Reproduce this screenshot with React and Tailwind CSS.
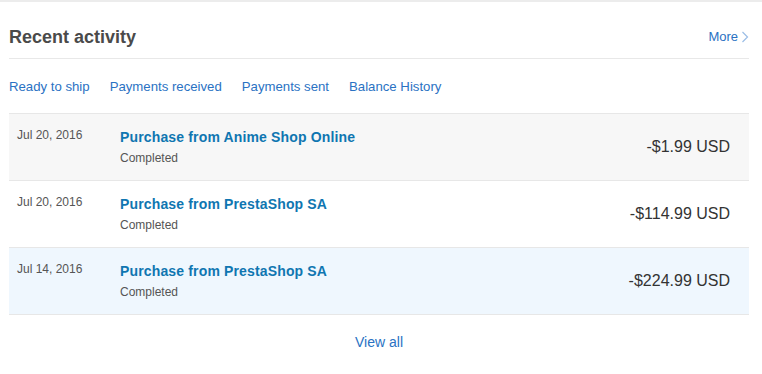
const rows = [
  { date: 'Jul 20, 2016', title: 'Purchase from Anime Shop Online', status: 'Completed', amount: '-$1.99 USD', bg: 'bg-[#f7f7f7]' },
  { date: 'Jul 20, 2016', title: 'Purchase from PrestaShop SA', status: 'Completed', amount: '-$114.99 USD', bg: 'bg-white' },
  { date: 'Jul 14, 2016', title: 'Purchase from PrestaShop SA', status: 'Completed', amount: '-$224.99 USD', bg: 'bg-[#eff7fe]' },
];

const tabs = ['Ready to ship', 'Payments received', 'Payments sent', 'Balance History'];

function ActivityRow({ row }) {
  return (
    <div className={`flex h-[67px] border-t border-[#e7e7e7] ${row.bg}`}>
      <div className="w-[111px] shrink-0 pl-2 pt-[13px] text-[12px] leading-4 text-[#555]">{row.date}</div>
      <div className="flex-1 pt-[14px]">
        <div className="text-[14px] font-bold leading-[18px] tracking-[0.15px] text-[#0f76b1]">{row.title}</div>
        <div className="mt-[4px] text-[12px] leading-4 text-[#555]">{row.status}</div>
      </div>
      <div className="flex items-center pr-[19px] text-[16px] text-[#333]">{row.amount}</div>
    </div>
  );
}

export default function App() {
  return (
    <div className="min-h-[374px] w-full border-t-2 border-[#ececec] bg-white pl-[9px] pr-[13px] font-['Liberation_Sans',Arial,sans-serif]">
      <div className="flex items-center justify-between border-b border-[#e8e8e8] pt-[24px] pb-[10px]">
        <h2 className="text-[18px] font-bold leading-[22px] text-[#4a4a4a]">Recent activity</h2>
        <a className="flex items-center gap-[3px] text-[13px] text-[#2a72c3]" href="#">
          More
          <svg width="8" height="12" viewBox="0 0 8 12" fill="none">
            <path d="M1.5 1 L6.5 6 L1.5 11" stroke="#9bbde6" strokeWidth="1.2" />
          </svg>
        </a>
      </div>
      <div className="flex h-[54px] items-center gap-5 pt-[2px] text-[13.2px] text-[#2a72c3]">
        {tabs.map((t) => (
          <a key={t} href="#">{t}</a>
        ))}
      </div>
      <div className="border-b border-[#e7e7e7]">
        {rows.map((r, i) => (
          <ActivityRow key={i} row={r} />
        ))}
      </div>
      <div className="pt-[17px] text-center text-[14px] leading-5">
        <a href="#" className="text-[#2a72c3]">View all</a>
      </div>
    </div>
  );
}
